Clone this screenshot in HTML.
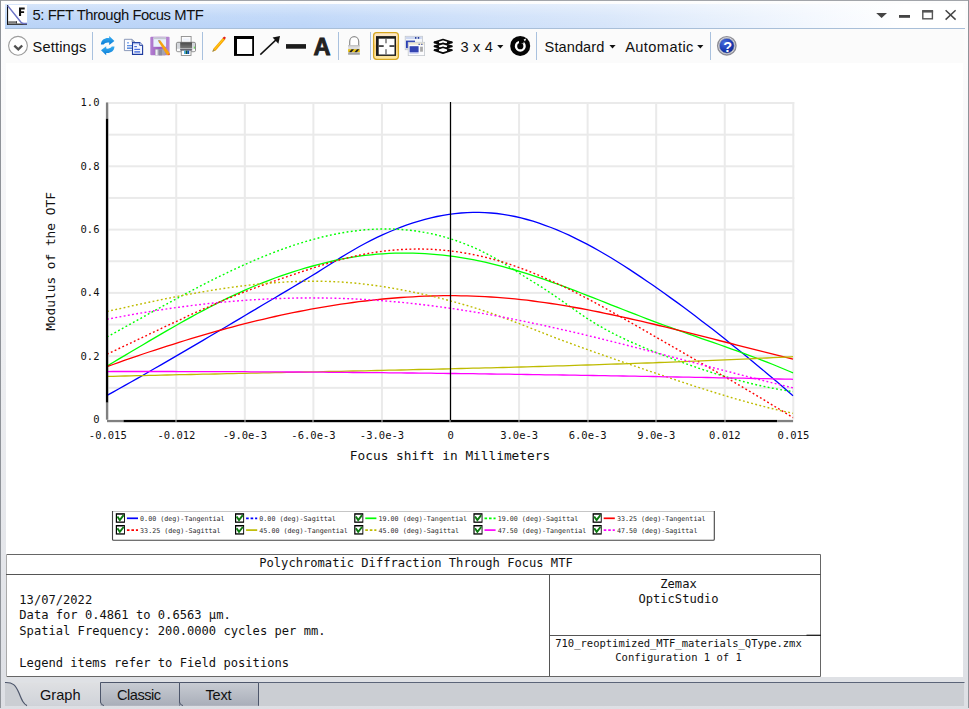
<!DOCTYPE html>
<html><head><meta charset="utf-8"><title>5: FFT Through Focus MTF</title>
<style>
html,body{margin:0;padding:0;}
body{width:969px;height:709px;overflow:hidden;background:#fff;position:relative;font-family:"Liberation Sans",sans-serif;}
.abs{position:absolute;}
#frame{left:0;top:0;width:969px;height:709px;background:linear-gradient(#fdfdfd 0px,#fbfbfc 62px,#dfe1e6 676px,#dddfe4 709px);}
#bl{left:0;top:0;width:1px;height:708px;background:#8f9399;}
#br{left:967.7px;top:0;width:1.3px;height:708px;background:#8f9399;}
#bt{left:0;top:0;width:969px;height:1px;background:#a2a5aa;}
#title{left:5px;top:4px;width:960px;height:24px;background:linear-gradient(180deg,rgba(255,255,255,.42) 0%,rgba(255,255,255,.12) 50%,rgba(255,255,255,0) 100%),linear-gradient(90deg,#b9d3f7 0px,#bcd5f8 300px,#d6e5fa 600px,#f2f7fe 800px,#ffffff 900px);border-bottom:1px solid #a9bfd8;}
#titletxt{left:32.5px;top:6.7px;font-size:14.8px;line-height:17px;color:#111;white-space:nowrap;letter-spacing:-0.43px;}
#toolbar{left:5px;top:29px;width:959px;height:33.5px;background:#fbfbfb;}
#content{left:6px;top:62.5px;width:957px;height:614px;background:#fff;}
.tt{position:absolute;font-size:14.6px;line-height:17px;color:#111;white-space:nowrap;top:38.7px;}
.sep{position:absolute;top:31.5px;width:1.2px;height:28.8px;background:#a9c1de;}
svg text{font-family:"DejaVu Sans Mono","Liberation Mono",monospace;fill:#111;}
.sm{font-size:10.5px;}
.md{font-size:12.8px;}
.bg{font-size:12.12px;}
.lg{font-size:6.7px;fill:#2a2a2a;}
#tabs{left:5px;top:677px;width:959px;height:29px;background:#dfe1e5;}
#tabfill{left:5px;top:682px;width:959px;height:24px;background:#cbced3;}
.tab{position:absolute;top:682px;height:23px;border:1px solid #4d566b;border-bottom:none;background:linear-gradient(#c8ccd3,#a9aeb9);box-sizing:border-box;}
.tabt{position:absolute;top:686.6px;font-size:14.6px;line-height:17px;color:#111;white-space:nowrap;}
</style></head><body>
<div id="frame" class="abs"></div>
<div id="bt" class="abs"></div><div id="bl" class="abs"></div><div id="br" class="abs"></div>
<div id="title" class="abs"></div>
<div id="titletxt" class="abs">5: FFT Through Focus MTF</div>
<div id="toolbar" class="abs"></div>
<div id="content" class="abs"></div>
<div class="tt" style="left:32.6px;letter-spacing:0.15px">Settings</div>
<div class="tt" style="left:460.4px;letter-spacing:0.2px">3 x 4</div>
<div class="tt" style="left:544.6px;letter-spacing:0.07px">Standard</div>
<div class="tt" style="left:625.2px;letter-spacing:0.41px">Automatic</div>
<div class="sep" style="left:92px"></div><div class="sep" style="left:202px"></div><div class="sep" style="left:338px"></div>
<div class="sep" style="left:370px"></div><div class="sep" style="left:536px"></div><div class="sep" style="left:710px"></div>
<!--ICONS-->
<div id="tabs" class="abs"></div><div id="tabfill" class="abs"></div>

<svg class="abs" style="left:0;top:0" width="969" height="709" viewBox="0 0 969 709">
<defs>
<linearGradient id="gblue" x1="0" y1="0" x2="0" y2="1"><stop offset="0" stop-color="#38aef2"/><stop offset="1" stop-color="#0a7cd6"/></linearGradient>
<linearGradient id="gpurple" x1="0" y1="0" x2="1" y2="0"><stop offset="0" stop-color="#b47fd2"/><stop offset="0.5" stop-color="#9a5cbc"/><stop offset="1" stop-color="#b98ad6"/></linearGradient>
<linearGradient id="gprn" x1="0" y1="0" x2="0" y2="1"><stop offset="0" stop-color="#4a4a4a"/><stop offset="1" stop-color="#7c7c7c"/></linearGradient>
<linearGradient id="ghl" x1="0" y1="0" x2="0" y2="1"><stop offset="0" stop-color="#fde9cf"/><stop offset="0.4" stop-color="#fddc9a"/><stop offset="0.5" stop-color="#fdd276"/><stop offset="1" stop-color="#fee9a6"/></linearGradient>
<radialGradient id="ghelp" cx="0.35" cy="0.3" r="0.8"><stop offset="0" stop-color="#4a6ede"/><stop offset="0.6" stop-color="#1a3ab4"/><stop offset="1" stop-color="#10288c"/></radialGradient>
<linearGradient id="gtab" x1="0" y1="0" x2="0" y2="1"><stop offset="0" stop-color="#c8ccd3"/><stop offset="1" stop-color="#a9aeb9"/></linearGradient>
<linearGradient id="gact" x1="0" y1="0" x2="0" y2="1"><stop offset="0" stop-color="#e2e3e5"/><stop offset="1" stop-color="#d0d3d9"/></linearGradient>
</defs>
<rect x="7" y="5" width="20" height="19.8" fill="#fff"/>
<rect x="7" y="5" width="1.1" height="19.8" fill="#111"/>
<rect x="7" y="23.6" width="20" height="1.2" fill="#111"/>
<rect x="8.2" y="21.2" width="8.6" height="2.3" fill="#7c7c7c"/><rect x="16" y="21.2" width="0.9" height="2.3" fill="#333"/>
<path d="M7.6,5.6 L21,22.3 Q22.2,23.6 24,23.6 L27,23.6" fill="none" stroke="#6d74c6" stroke-width="1.5"/>
<path d="M19,7.5 h5.7 v2 h-3.6 v1.8 h3 v1.8 h-3 v3 h-2.1z" fill="#111"/>
<path d="M876.2,12.9 h10.8 l-5.4,5.2z" fill="#444"/>
<rect x="899" y="15" width="11" height="2.8" fill="#444"/>
<rect x="922.8" y="11.6" width="9.6" height="7.2" fill="none" stroke="#555" stroke-width="1.4"/><rect x="922.1" y="10" width="11" height="2.4" fill="#555"/>
<path d="M945.6,10.2 L955.6,19.6 M955.6,10.2 L945.6,19.6" stroke="#444" stroke-width="1.5" fill="none"/>
<circle cx="18" cy="45.8" r="9.4" fill="#fff" stroke="#9c9c9c" stroke-width="1.1"/>
<path d="M14.3,45.6 L18.3,49.4 L22.2,45.5" fill="none" stroke="#505050" stroke-width="2.3"/>
<path d="M100.9,44.6 C101.2,39.6 105.4,37.6 109.2,38.2 L109.2,36 L114.4,41 L109.2,45 L109.2,42.6 C106.8,42.2 104.6,43 103.6,44.6z" fill="url(#gblue)"/>
<path d="M114.5,46.6 C114.2,51.6 110,53.6 106.2,53 L106.2,55.2 L101,50.2 L106.2,46.2 L106.2,48.6 C108.6,49 110.8,48.2 111.8,46.6z" fill="url(#gblue)"/>
<path d="M124.4,39.3 h7.6 l2.8,2.8 v8.5 h-10.4z" fill="#fdfdff" stroke="#7f8fb2" stroke-width="0.9"/>
<path d="M132,39.3 v2.8 h2.8" fill="#aab4cc" stroke="#7f8fb2" stroke-width="0.7"/>
<rect x="127" y="42" width="2" height="1.6" fill="#8fb4ee"/><rect x="127" y="45" width="5" height="1.3" fill="#5f8fe0"/><rect x="127" y="47.4" width="5" height="1.6" fill="#5f8fe0"/>
<path d="M132.5,42.5 h7.2 l2.9,2.9 v9 h-10.1z" fill="#f4f7ff" stroke="#1c3a9e" stroke-width="1.1"/>
<path d="M139.7,42.5 v2.9 h2.9" fill="#fff" stroke="#1c3a9e" stroke-width="0.9"/>
<rect x="132.9" y="42.9" width="6.4" height="1.4" fill="#9fb4ea"/>
<rect x="134.3" y="46" width="2.6" height="1.2" fill="#4a6fdc"/><rect x="134.3" y="48.8" width="5.8" height="1.2" fill="#4a6fdc"/><rect x="134.3" y="51.2" width="5.8" height="1.4" fill="#4a6fdc"/>
<rect x="150.3" y="36.7" width="19.3" height="18.6" rx="1" fill="url(#gpurple)"/>
<rect x="153.4" y="37.4" width="12.7" height="9.4" fill="#e9f1fb"/><rect x="153.4" y="37.4" width="12.7" height="1.8" fill="#c4c8d0"/>
<rect x="155" y="49.2" width="10.2" height="6.1" fill="#a3a3b4"/><rect x="155.6" y="49.6" width="2" height="5.7" fill="#f0f0f6"/><rect x="159" y="49.6" width="3" height="5.7" fill="#8c8ca0"/>
<path d="M158.2,40 L160.4,40.6 L169.6,53 L169,55.2 L166.9,55 L158.9,42.3z" fill="#f7a311"/>
<path d="M158.2,40 L160.4,40.6 L158.9,42.3z" fill="#9a9a8a"/><path d="M168.3,54.6 l1.2,-1.4 l0.1,2 z" fill="#e02020"/>
<rect x="181.3" y="36.5" width="9.8" height="6.5" fill="#fcfcfd" stroke="#8e8e8e" stroke-width="0.9"/>
<rect x="183" y="38.4" width="6.4" height="2.4" fill="#eef2fb"/>
<rect x="176.4" y="42.3" width="19.1" height="9.4" rx="1.4" fill="#d4d7dc" stroke="#7d7d7d" stroke-width="0.9"/>
<rect x="180.2" y="42.4" width="11.8" height="6.2" fill="url(#gprn)"/>
<rect x="176.9" y="48.8" width="18.1" height="2.4" fill="#fafafa"/>
<rect x="193.9" y="46.6" width="1" height="2" fill="#66e04c"/>
<rect x="181.3" y="50" width="9.7" height="5.5" fill="#fff" stroke="#8e8e8e" stroke-width="0.9"/>
<rect x="180" y="49.4" width="12.2" height="0.9" fill="#2a2a3a"/>
<rect x="184" y="50.6" width="1.6" height="3.4" fill="#46b0f0"/><rect x="185.6" y="50.6" width="1.6" height="3.4" fill="#0d5a36"/><rect x="187.2" y="50.6" width="2" height="3.4" fill="#0a50a8"/>
<path d="M212.3,51.8 L213.6,48.4 L223.2,37.4 L225.4,39.2 L215.8,50.4z" fill="#f8a208"/>
<path d="M214.6,49.4 L223.6,38.8" stroke="#ffd814" stroke-width="1" fill="none"/>
<path d="M212.3,51.8 L213.3,49.2 L214.9,50.7z" fill="#8a8a60"/>
<path d="M222.6,38 L224.2,36.4 L226,37.8 L224.6,39.6z" fill="#e02222"/>
<rect x="234" y="36" width="20" height="19.9" fill="#000"/><rect x="237" y="39" width="15.2" height="15" fill="#fff"/>
<path d="M260.3,54.6 L276.5,39.4" stroke="#111" stroke-width="1.5" fill="none"/>
<path d="M280,36 L272.6,37.6 L278.4,43.8z" fill="#111"/>
<rect x="286" y="44.1" width="20" height="4.6" fill="#1c1c1c"/>
<path d="M349.7,46 V41.6 A4.5,4.9 0 0 1 358.7,41.6 V46" fill="#fff" stroke="#8c8c8c" stroke-width="1.2"/>
<rect x="348.1" y="45.3" width="11.7" height="9.4" fill="#dcdcdc"/>
<rect x="348.1" y="45.3" width="11.7" height="1" fill="#b8b8b8"/>
<rect x="348.1" y="49.2" width="11.7" height="3" fill="#e8c010"/>
<path d="M349,52.2 l2.6,-3 h2.4 l-2.6,3z M354.4,52.2 l2.6,-3 h2.4 l-2.6,3z" fill="#222"/>
<rect x="348.1" y="52.6" width="11.7" height="2.1" fill="#a4a4a4"/>
<rect x="373.6" y="32.7" width="24.8" height="26.6" rx="3" fill="url(#ghl)" stroke="#d6a722" stroke-width="1.3"/>
<rect x="376" y="36.1" width="20" height="19.8" fill="#1c1c1c"/><rect x="378.7" y="38.7" width="15.8" height="15.8" fill="#fff"/>
<rect x="378.7" y="45.3" width="5" height="1.5" fill="#1c1c1c"/><rect x="389.5" y="45.3" width="5" height="1.5" fill="#1c1c1c"/>
<rect x="385.4" y="38.7" width="1.2" height="4.6" fill="#555"/><rect x="385.4" y="49.2" width="1.2" height="5.3" fill="#555"/>
<rect x="405.2" y="36.3" width="17.2" height="13.4" fill="#f4f6fa" stroke="#bfc4cc" stroke-width="0.8"/>
<rect x="405.8" y="36.8" width="16" height="2.2" fill="#cdd7f0"/><rect x="415" y="37" width="1.4" height="1.8" fill="#2a3f9a"/><rect x="417.8" y="37" width="1.4" height="1.8" fill="#2a3f9a"/>
<rect x="406" y="40.6" width="9" height="7.6" fill="#2a3fb4"/>
<rect x="408.2" y="42.3" width="16.4" height="13.3" fill="#fbfbfd" stroke="#c4c8ce" stroke-width="0.8"/>
<rect x="408.8" y="42.8" width="15.2" height="1.9" fill="#f0e9d2"/><rect x="418.4" y="43.8" width="1.6" height="0.9" fill="#2a3f9a"/><rect x="421" y="43.8" width="1.6" height="0.9" fill="#2a3f9a"/>
<rect x="409.6" y="46.2" width="9" height="5.8" fill="#3444b2"/><rect x="409.6" y="52" width="9" height="1.5" fill="#aab2ea"/>
<rect x="420.1" y="46.7" width="2.8" height="5" fill="#a9a9a9"/>
<path d="M434.4,42.4 L443,39.5 L451.8,42.4 L443,45.3z" fill="#fff" stroke="#0a0a0a" stroke-width="1.7" stroke-linejoin="round"/>
<path d="M434.4,46.3 L443,43.4 L451.8,46.3 L443,49.2z" fill="#fff" stroke="#0a0a0a" stroke-width="1.7" stroke-linejoin="round"/>
<path d="M434.4,50.2 L443,47.3 L451.8,50.2 L443,53.1z" fill="#fff" stroke="#0a0a0a" stroke-width="1.7" stroke-linejoin="round"/>
<path d="M434,42.4 h5 M447,42.4 h5.4 M434,46.3 h5 M447,46.3 h5.4 M434,50.2 h5 M447,50.2 h5.4" stroke="#0a0a0a" stroke-width="1.8"/>
<path d="M497.2,44.9 h6.2 l-3.1,3.7z" fill="#111"/>
<path d="M609.4,44.9 h6.2 l-3.1,3.7z" fill="#111"/>
<path d="M697.2,44.9 h6.2 l-3.1,3.7z" fill="#111"/>
<circle cx="520.2" cy="45.9" r="10" fill="#050505"/>
<circle cx="520.3" cy="46.2" r="4.3" fill="none" stroke="#fff" stroke-width="2.4"/>
<rect x="519" y="39" width="4.6" height="4.4" fill="#050505"/><rect x="519.4" y="42.4" width="1.6" height="4.4" fill="#050505"/><path d="M523.6,39.6 l2.6,-1 l-1.2,3z" fill="#fff"/>
<circle cx="726.8" cy="45.8" r="9.2" fill="#e8e8ec" stroke="#8e8e96" stroke-width="1.4"/>
<circle cx="726.8" cy="45.8" r="7.5" fill="url(#ghelp)" stroke="#9aa0b0" stroke-width="0.8"/><text x="322" y="54.6" text-anchor="middle" style="font-family:'Liberation Sans',sans-serif;font-weight:bold;font-size:23.6px;fill:#222;stroke:#222;stroke-width:0.9px">A</text><text x="727.8" y="51.5" text-anchor="middle" style="font-family:'Liberation Sans',sans-serif;font-weight:bold;font-size:14.5px;fill:#fff">?</text><path d="M5,682.4 C13,682 15.5,685 19,693 C22,700.5 23.5,704 27,705.8 L100.5,705.8 L100.5,677 L5,677z" fill="url(#gact)"/>
<path d="M5,677 H100.5 V682.5 H5z" fill="#dfe1e5"/>
<path d="M5,682.5 C13,682.2 15.5,685 19,693 C22,700.5 23.5,704 27,705.6" fill="none" stroke="#4d566b" stroke-width="1.2"/>
<path d="M100.5,705.8 V682.5 H179.5 V705.8z" fill="url(#gtab)" stroke="none"/>
<path d="M100.5,702.5 V682.5 H179.5 V705.8" fill="none" stroke="#4d566b" stroke-width="1"/>
<path d="M100.5,702 Q100.8,705 104.0,705.6" fill="none" stroke="#4d566b" stroke-width="1"/>
<path d="M179.5,705.8 V682.5 H258.5 V705.8z" fill="url(#gtab)" stroke="none"/>
<path d="M179.5,702.5 V682.5 H258.5 V705.8" fill="none" stroke="#4d566b" stroke-width="1"/>
<path d="M179.5,702 Q179.8,705 183.0,705.6" fill="none" stroke="#4d566b" stroke-width="1"/>
<path d="M258.5,682.5 H964.5" stroke="#5b6478" stroke-width="1" fill="none"/>
<rect x="106.70" y="102.00" width="2" height="317.5" fill="#eaeaea"/>
<rect x="175.26" y="102.00" width="2" height="317.5" fill="#eaeaea"/>
<rect x="243.82" y="102.00" width="2" height="317.5" fill="#eaeaea"/>
<rect x="312.38" y="102.00" width="2" height="317.5" fill="#eaeaea"/>
<rect x="380.94" y="102.00" width="2" height="317.5" fill="#eaeaea"/>
<rect x="449.50" y="102.00" width="2" height="317.5" fill="#eaeaea"/>
<rect x="518.06" y="102.00" width="2" height="317.5" fill="#eaeaea"/>
<rect x="586.62" y="102.00" width="2" height="317.5" fill="#eaeaea"/>
<rect x="655.18" y="102.00" width="2" height="317.5" fill="#eaeaea"/>
<rect x="723.74" y="102.00" width="2" height="317.5" fill="#eaeaea"/>
<rect x="792.30" y="102.00" width="2" height="317.5" fill="#eaeaea"/>
<rect x="107.7" y="386.85" width="686.6" height="2" fill="#eaeaea"/>
<rect x="107.7" y="355.20" width="686.6" height="2" fill="#eaeaea"/>
<rect x="107.7" y="323.55" width="686.6" height="2" fill="#eaeaea"/>
<rect x="107.7" y="291.90" width="686.6" height="2" fill="#eaeaea"/>
<rect x="107.7" y="260.25" width="686.6" height="2" fill="#eaeaea"/>
<rect x="107.7" y="228.60" width="686.6" height="2" fill="#eaeaea"/>
<rect x="107.7" y="196.95" width="686.6" height="2" fill="#eaeaea"/>
<rect x="107.7" y="165.30" width="686.6" height="2" fill="#eaeaea"/>
<rect x="107.7" y="133.65" width="686.6" height="2" fill="#eaeaea"/>
<rect x="107.7" y="102.00" width="686.6" height="2" fill="#eaeaea"/>
<path d="M107.0,395.4 L113.0,392.1 L119.0,388.8 L125.0,385.4 L131.0,382.0 L137.0,378.6 L143.0,375.2 L149.0,371.8 L155.0,368.3 L161.0,364.9 L167.0,361.4 L173.0,357.9 L179.0,354.4 L185.0,350.9 L191.0,347.4 L197.0,343.9 L203.0,340.4 L209.0,336.8 L215.0,333.3 L221.0,329.7 L227.0,326.2 L233.0,322.6 L239.0,319.1 L245.0,315.5 L251.0,311.9 L257.0,308.4 L263.0,304.8 L269.0,301.2 L275.0,297.7 L281.0,294.1 L287.0,290.6 L293.0,287.0 L299.0,283.4 L305.0,279.9 L311.0,276.3 L317.0,272.6 L323.0,268.8 L329.0,265.0 L335.0,261.2 L341.0,257.4 L347.0,253.8 L353.0,250.2 L359.0,246.8 L365.0,243.5 L371.0,240.4 L377.0,237.4 L383.0,234.6 L389.0,232.0 L395.0,229.5 L401.0,227.1 L407.0,224.9 L413.0,222.9 L419.0,221.1 L425.0,219.4 L431.0,217.9 L437.0,216.5 L443.0,215.4 L449.0,214.4 L455.0,213.6 L461.0,213.0 L467.0,212.6 L473.0,212.4 L479.0,212.4 L485.0,212.6 L491.0,213.0 L497.0,213.5 L503.0,214.3 L509.0,215.3 L515.0,216.5 L521.0,217.9 L527.0,219.5 L533.0,221.2 L539.0,223.2 L545.0,225.3 L551.0,227.5 L557.0,229.9 L563.0,232.5 L569.0,235.2 L575.0,238.1 L581.0,241.1 L587.0,244.2 L593.0,247.4 L599.0,250.8 L605.0,254.3 L611.0,257.8 L617.0,261.5 L623.0,265.3 L629.0,269.1 L635.0,273.1 L641.0,277.1 L647.0,281.2 L653.0,285.3 L659.0,289.5 L665.0,293.8 L671.0,298.1 L677.0,302.4 L683.0,306.8 L689.0,311.3 L695.0,315.8 L701.0,320.4 L707.0,325.0 L713.0,329.6 L719.0,334.3 L725.0,339.1 L731.0,343.9 L737.0,348.7 L743.0,353.6 L749.0,358.5 L755.0,363.4 L761.0,368.4 L767.0,373.5 L773.0,378.5 L779.0,383.6 L785.0,388.8 L791.0,394.0 L793.0,395.7" fill="none" stroke="#0000ff" stroke-width="1.3"/>
<path d="M107.0,366.1 L113.0,362.5 L119.0,358.9 L125.0,355.4 L131.0,351.8 L137.0,348.2 L143.0,344.7 L149.0,341.1 L155.0,337.6 L161.0,334.1 L167.0,330.6 L173.0,327.2 L179.0,323.8 L185.0,320.4 L191.0,317.1 L197.0,313.8 L203.0,310.6 L209.0,307.5 L215.0,304.4 L221.0,301.4 L227.0,298.4 L233.0,295.6 L239.0,292.8 L245.0,290.1 L251.0,287.5 L257.0,285.0 L263.0,282.6 L269.0,280.3 L275.0,278.0 L281.0,275.9 L287.0,273.8 L293.0,271.9 L299.0,270.0 L305.0,268.2 L311.0,266.5 L317.0,264.8 L323.0,263.3 L329.0,261.8 L335.0,260.5 L341.0,259.2 L347.0,258.1 L353.0,257.1 L359.0,256.2 L365.0,255.4 L371.0,254.8 L377.0,254.2 L383.0,253.8 L389.0,253.4 L395.0,253.2 L401.0,253.1 L407.0,253.1 L413.0,253.2 L419.0,253.4 L425.0,253.7 L431.0,254.1 L437.0,254.6 L443.0,255.2 L449.0,255.9 L455.0,256.7 L461.0,257.6 L467.0,258.6 L473.0,259.7 L479.0,260.9 L485.0,262.2 L491.0,263.6 L497.0,265.1 L503.0,266.6 L509.0,268.3 L515.0,270.0 L521.0,271.8 L527.0,273.7 L533.0,275.6 L539.0,277.6 L545.0,279.7 L551.0,281.8 L557.0,284.0 L563.0,286.2 L569.0,288.4 L575.0,290.7 L581.0,293.0 L587.0,295.3 L593.0,297.7 L599.0,300.0 L605.0,302.4 L611.0,304.8 L617.0,307.2 L623.0,309.5 L629.0,311.9 L635.0,314.2 L641.0,316.5 L647.0,318.8 L653.0,321.1 L659.0,323.3 L665.0,325.5 L671.0,327.7 L677.0,329.9 L683.0,332.0 L689.0,334.1 L695.0,336.2 L701.0,338.3 L707.0,340.3 L713.0,342.4 L719.0,344.5 L725.0,346.6 L731.0,348.8 L737.0,350.9 L743.0,353.1 L749.0,355.3 L755.0,357.5 L761.0,359.8 L767.0,362.1 L773.0,364.5 L779.0,367.0 L785.0,369.5 L791.0,372.0 L793.0,372.9" fill="none" stroke="#00ff00" stroke-width="1.3"/>
<path d="M107.0,337.0 L113.0,333.7 L119.0,330.4 L125.0,327.0 L131.0,323.7 L137.0,320.4 L143.0,317.1 L149.0,313.7 L155.0,310.4 L161.0,307.1 L167.0,303.9 L173.0,300.6 L179.0,297.4 L185.0,294.1 L191.0,291.0 L197.0,287.8 L203.0,284.7 L209.0,281.7 L215.0,278.6 L221.0,275.7 L227.0,272.8 L233.0,269.9 L239.0,267.1 L245.0,264.4 L251.0,261.8 L257.0,259.2 L263.0,256.7 L269.0,254.3 L275.0,252.0 L281.0,249.7 L287.0,247.6 L293.0,245.5 L299.0,243.6 L305.0,241.7 L311.0,240.0 L317.0,238.4 L323.0,236.8 L329.0,235.5 L335.0,234.2 L341.0,233.0 L347.0,232.0 L353.0,231.2 L359.0,230.4 L365.0,229.8 L371.0,229.4 L377.0,229.1 L383.0,229.0 L389.0,229.0 L395.0,229.1 L401.0,229.5 L407.0,230.0 L413.0,230.6 L419.0,231.5 L425.0,232.5 L431.0,233.6 L437.0,235.0 L443.0,236.6 L449.0,238.3 L455.0,240.2 L461.0,242.4 L467.0,244.7 L473.0,247.2 L479.0,249.9 L485.0,252.9 L491.0,256.0 L497.0,259.4 L503.0,262.9 L509.0,266.7 L515.0,270.5 L521.0,274.3 L527.0,278.1 L533.0,281.8 L539.0,285.5 L545.0,289.3 L551.0,293.3 L557.0,297.4 L563.0,301.6 L569.0,305.8 L575.0,310.1 L581.0,314.3 L587.0,318.3 L593.0,322.1 L599.0,325.7 L605.0,329.1 L611.0,332.3 L617.0,335.4 L623.0,338.3 L629.0,341.1 L635.0,343.7 L641.0,346.3 L647.0,348.8 L653.0,351.2 L659.0,353.6 L665.0,355.9 L671.0,358.2 L677.0,360.5 L683.0,362.7 L689.0,364.8 L695.0,366.9 L701.0,369.0 L707.0,370.9 L713.0,372.9 L719.0,374.7 L725.0,376.5 L731.0,378.3 L737.0,379.9 L743.0,381.5 L749.0,383.0 L755.0,384.5 L761.0,385.8 L767.0,387.1 L773.0,388.3 L779.0,389.4 L785.0,390.4 L791.0,391.3 L793.0,391.6" fill="none" stroke="#00ff00" stroke-width="1.4" stroke-dasharray="1.85 2.39"/>
<path d="M107.0,366.6 L113.0,364.5 L119.0,362.3 L125.0,360.2 L131.0,358.1 L137.0,356.1 L143.0,354.0 L149.0,352.0 L155.0,350.1 L161.0,348.1 L167.0,346.2 L173.0,344.3 L179.0,342.4 L185.0,340.5 L191.0,338.7 L197.0,336.9 L203.0,335.1 L209.0,333.4 L215.0,331.7 L221.0,330.0 L227.0,328.4 L233.0,326.8 L239.0,325.2 L245.0,323.7 L251.0,322.2 L257.0,320.7 L263.0,319.3 L269.0,317.9 L275.0,316.5 L281.0,315.2 L287.0,313.9 L293.0,312.7 L299.0,311.5 L305.0,310.3 L311.0,309.2 L317.0,308.1 L323.0,307.1 L329.0,306.1 L335.0,305.1 L341.0,304.2 L347.0,303.3 L353.0,302.5 L359.0,301.7 L365.0,301.0 L371.0,300.3 L377.0,299.6 L383.0,299.0 L389.0,298.5 L395.0,298.0 L401.0,297.5 L407.0,297.1 L413.0,296.8 L419.0,296.4 L425.0,296.2 L431.0,296.0 L437.0,295.8 L443.0,295.7 L449.0,295.7 L455.0,295.7 L461.0,295.8 L467.0,295.9 L473.0,296.1 L479.0,296.3 L485.0,296.6 L491.0,297.0 L497.0,297.4 L503.0,297.8 L509.0,298.3 L515.0,298.9 L521.0,299.6 L527.0,300.2 L533.0,301.0 L539.0,301.8 L545.0,302.6 L551.0,303.5 L557.0,304.4 L563.0,305.4 L569.0,306.4 L575.0,307.5 L581.0,308.5 L587.0,309.7 L593.0,310.8 L599.0,312.0 L605.0,313.3 L611.0,314.5 L617.0,315.8 L623.0,317.1 L629.0,318.5 L635.0,319.8 L641.0,321.2 L647.0,322.6 L653.0,324.0 L659.0,325.5 L665.0,326.9 L671.0,328.4 L677.0,329.9 L683.0,331.4 L689.0,332.9 L695.0,334.4 L701.0,335.9 L707.0,337.4 L713.0,338.9 L719.0,340.5 L725.0,342.0 L731.0,343.5 L737.0,345.1 L743.0,346.6 L749.0,348.1 L755.0,349.7 L761.0,351.2 L767.0,352.7 L773.0,354.2 L779.0,355.7 L785.0,357.2 L791.0,358.7 L793.0,359.2" fill="none" stroke="#ff0000" stroke-width="1.3"/>
<path d="M107.0,354.2 L113.0,351.4 L119.0,348.5 L125.0,345.7 L131.0,342.9 L137.0,340.0 L143.0,337.2 L149.0,334.3 L155.0,331.5 L161.0,328.6 L167.0,325.8 L173.0,323.0 L179.0,320.2 L185.0,317.4 L191.0,314.6 L197.0,311.9 L203.0,309.2 L209.0,306.6 L215.0,304.0 L221.0,301.4 L227.0,298.9 L233.0,296.4 L239.0,294.0 L245.0,291.7 L251.0,289.4 L257.0,287.2 L263.0,285.0 L269.0,282.9 L275.0,280.8 L281.0,278.7 L287.0,276.7 L293.0,274.7 L299.0,272.6 L305.0,270.6 L311.0,268.7 L317.0,266.7 L323.0,264.8 L329.0,263.0 L335.0,261.2 L341.0,259.5 L347.0,258.0 L353.0,256.5 L359.0,255.2 L365.0,254.0 L371.0,253.0 L377.0,252.0 L383.0,251.2 L389.0,250.5 L395.0,250.0 L401.0,249.5 L407.0,249.3 L413.0,249.1 L419.0,249.0 L425.0,249.1 L431.0,249.3 L437.0,249.7 L443.0,250.2 L449.0,250.8 L455.0,251.5 L461.0,252.4 L467.0,253.4 L473.0,254.5 L479.0,255.8 L485.0,257.2 L491.0,258.7 L497.0,260.3 L503.0,262.1 L509.0,264.0 L515.0,266.1 L521.0,268.3 L527.0,270.5 L533.0,272.9 L539.0,275.4 L545.0,278.0 L551.0,280.7 L557.0,283.4 L563.0,286.3 L569.0,289.2 L575.0,292.2 L581.0,295.3 L587.0,298.4 L593.0,301.6 L599.0,304.8 L605.0,308.1 L611.0,311.4 L617.0,314.8 L623.0,318.2 L629.0,321.6 L635.0,325.0 L641.0,328.4 L647.0,331.9 L653.0,335.4 L659.0,338.8 L665.0,342.3 L671.0,345.7 L677.0,349.2 L683.0,352.6 L689.0,356.1 L695.0,359.5 L701.0,363.0 L707.0,366.4 L713.0,369.9 L719.0,373.4 L725.0,376.9 L731.0,380.4 L737.0,383.9 L743.0,387.4 L749.0,391.0 L755.0,394.6 L761.0,398.1 L767.0,401.8 L773.0,405.4 L779.0,409.0 L785.0,412.7 L791.0,416.4 L793.0,417.7" fill="none" stroke="#ff0000" stroke-width="1.4" stroke-dasharray="1.85 2.39"/>
<path d="M107.0,376.4 L113.0,376.3 L119.0,376.1 L125.0,376.0 L131.0,375.8 L137.0,375.7 L143.0,375.6 L149.0,375.4 L155.0,375.3 L161.0,375.1 L167.0,375.0 L173.0,374.9 L179.0,374.7 L185.0,374.6 L191.0,374.5 L197.0,374.3 L203.0,374.2 L209.0,374.1 L215.0,374.0 L221.0,373.8 L227.0,373.7 L233.0,373.6 L239.0,373.4 L245.0,373.3 L251.0,373.2 L257.0,373.1 L263.0,372.9 L269.0,372.8 L275.0,372.7 L281.0,372.6 L287.0,372.4 L293.0,372.3 L299.0,372.2 L305.0,372.0 L311.0,371.9 L317.0,371.8 L323.0,371.7 L329.0,371.5 L335.0,371.4 L341.0,371.3 L347.0,371.2 L353.0,371.0 L359.0,370.9 L365.0,370.8 L371.0,370.6 L377.0,370.5 L383.0,370.4 L389.0,370.2 L395.0,370.1 L401.0,370.0 L407.0,369.8 L413.0,369.7 L419.0,369.5 L425.0,369.4 L431.0,369.3 L437.0,369.1 L443.0,369.0 L449.0,368.8 L455.0,368.7 L461.0,368.5 L467.0,368.4 L473.0,368.2 L479.0,368.1 L485.0,367.9 L491.0,367.8 L497.0,367.6 L503.0,367.5 L509.0,367.3 L515.0,367.1 L521.0,367.0 L527.0,366.8 L533.0,366.6 L539.0,366.5 L545.0,366.3 L551.0,366.1 L557.0,365.9 L563.0,365.8 L569.0,365.6 L575.0,365.4 L581.0,365.2 L587.0,365.0 L593.0,364.8 L599.0,364.6 L605.0,364.4 L611.0,364.2 L617.0,364.0 L623.0,363.8 L629.0,363.6 L635.0,363.4 L641.0,363.2 L647.0,363.0 L653.0,362.8 L659.0,362.5 L665.0,362.3 L671.0,362.1 L677.0,361.9 L683.0,361.6 L689.0,361.4 L695.0,361.1 L701.0,360.9 L707.0,360.6 L713.0,360.4 L719.0,360.1 L725.0,359.9 L731.0,359.6 L737.0,359.3 L743.0,359.1 L749.0,358.8 L755.0,358.5 L761.0,358.2 L767.0,358.0 L773.0,357.7 L779.0,357.4 L785.0,357.1 L791.0,356.8 L793.0,356.7" fill="none" stroke="#bebb00" stroke-width="1.3"/>
<path d="M107.0,311.5 L113.0,310.1 L119.0,308.8 L125.0,307.5 L131.0,306.1 L137.0,304.8 L143.0,303.5 L149.0,302.2 L155.0,301.0 L161.0,299.7 L167.0,298.5 L173.0,297.3 L179.0,296.1 L185.0,295.0 L191.0,293.9 L197.0,292.8 L203.0,291.8 L209.0,290.8 L215.0,289.8 L221.0,288.9 L227.0,288.0 L233.0,287.1 L239.0,286.3 L245.0,285.6 L251.0,284.9 L257.0,284.2 L263.0,283.7 L269.0,283.1 L275.0,282.7 L281.0,282.3 L287.0,281.9 L293.0,281.6 L299.0,281.4 L305.0,281.3 L311.0,281.2 L317.0,281.2 L323.0,281.3 L329.0,281.5 L335.0,281.7 L341.0,282.0 L347.0,282.5 L353.0,282.9 L359.0,283.5 L365.0,284.2 L371.0,284.9 L377.0,285.7 L383.0,286.6 L389.0,287.6 L395.0,288.6 L401.0,289.7 L407.0,290.9 L413.0,292.1 L419.0,293.3 L425.0,294.6 L431.0,296.0 L437.0,297.5 L443.0,298.9 L449.0,300.5 L455.0,302.1 L461.0,303.8 L467.0,305.5 L473.0,307.3 L479.0,309.2 L485.0,311.2 L491.0,313.2 L497.0,315.3 L503.0,317.5 L509.0,319.7 L515.0,322.0 L521.0,324.3 L527.0,326.7 L533.0,329.0 L539.0,331.4 L545.0,333.8 L551.0,336.1 L557.0,338.4 L563.0,340.7 L569.0,342.9 L575.0,345.1 L581.0,347.3 L587.0,349.4 L593.0,351.6 L599.0,353.7 L605.0,355.8 L611.0,357.9 L617.0,360.0 L623.0,362.1 L629.0,364.1 L635.0,366.2 L641.0,368.2 L647.0,370.3 L653.0,372.3 L659.0,374.3 L665.0,376.3 L671.0,378.3 L677.0,380.4 L683.0,382.3 L689.0,384.3 L695.0,386.3 L701.0,388.2 L707.0,390.1 L713.0,392.0 L719.0,393.8 L725.0,395.7 L731.0,397.5 L737.0,399.2 L743.0,400.9 L749.0,402.6 L755.0,404.2 L761.0,405.8 L767.0,407.4 L773.0,408.8 L779.0,410.3 L785.0,411.6 L791.0,412.9 L793.0,413.4" fill="none" stroke="#bebb00" stroke-width="1.4" stroke-dasharray="1.85 2.39"/>
<path d="M107.0,371.6 L113.0,371.5 L119.0,371.5 L125.0,371.5 L131.0,371.5 L137.0,371.5 L143.0,371.5 L149.0,371.5 L155.0,371.5 L161.0,371.5 L167.0,371.5 L173.0,371.5 L179.0,371.6 L185.0,371.6 L191.0,371.6 L197.0,371.6 L203.0,371.6 L209.0,371.6 L215.0,371.6 L221.0,371.7 L227.0,371.7 L233.0,371.7 L239.0,371.7 L245.0,371.7 L251.0,371.8 L257.0,371.8 L263.0,371.8 L269.0,371.9 L275.0,371.9 L281.0,371.9 L287.0,372.0 L293.0,372.0 L299.0,372.0 L305.0,372.1 L311.0,372.1 L317.0,372.2 L323.0,372.2 L329.0,372.3 L335.0,372.3 L341.0,372.4 L347.0,372.4 L353.0,372.5 L359.0,372.5 L365.0,372.6 L371.0,372.6 L377.0,372.7 L383.0,372.7 L389.0,372.8 L395.0,372.9 L401.0,372.9 L407.0,373.0 L413.0,373.0 L419.0,373.1 L425.0,373.2 L431.0,373.2 L437.0,373.3 L443.0,373.4 L449.0,373.5 L455.0,373.5 L461.0,373.6 L467.0,373.7 L473.0,373.7 L479.0,373.8 L485.0,373.9 L491.0,374.0 L497.0,374.1 L503.0,374.1 L509.0,374.2 L515.0,374.3 L521.0,374.4 L527.0,374.5 L533.0,374.6 L539.0,374.7 L545.0,374.8 L551.0,374.8 L557.0,374.9 L563.0,375.0 L569.0,375.1 L575.0,375.2 L581.0,375.3 L587.0,375.4 L593.0,375.5 L599.0,375.6 L605.0,375.7 L611.0,375.8 L617.0,375.9 L623.0,376.0 L629.0,376.1 L635.0,376.2 L641.0,376.3 L647.0,376.4 L653.0,376.5 L659.0,376.6 L665.0,376.8 L671.0,376.9 L677.0,377.0 L683.0,377.1 L689.0,377.2 L695.0,377.3 L701.0,377.4 L707.0,377.5 L713.0,377.7 L719.0,377.8 L725.0,377.9 L731.0,378.0 L737.0,378.1 L743.0,378.2 L749.0,378.4 L755.0,378.5 L761.0,378.6 L767.0,378.7 L773.0,378.9 L779.0,379.0 L785.0,379.1 L791.0,379.2 L793.0,379.3" fill="none" stroke="#ff00ff" stroke-width="1.3"/>
<path d="M107.0,319.3 L113.0,318.1 L119.0,317.0 L125.0,315.9 L131.0,314.8 L137.0,313.7 L143.0,312.7 L149.0,311.7 L155.0,310.7 L161.0,309.8 L167.0,308.9 L173.0,308.0 L179.0,307.2 L185.0,306.4 L191.0,305.6 L197.0,304.9 L203.0,304.2 L209.0,303.5 L215.0,302.9 L221.0,302.3 L227.0,301.8 L233.0,301.3 L239.0,300.8 L245.0,300.3 L251.0,299.9 L257.0,299.6 L263.0,299.2 L269.0,298.9 L275.0,298.7 L281.0,298.5 L287.0,298.3 L293.0,298.1 L299.0,298.0 L305.0,298.0 L311.0,297.9 L317.0,298.0 L323.0,298.0 L329.0,298.1 L335.0,298.2 L341.0,298.4 L347.0,298.6 L353.0,298.9 L359.0,299.2 L365.0,299.5 L371.0,299.9 L377.0,300.3 L383.0,300.8 L389.0,301.3 L395.0,301.8 L401.0,302.3 L407.0,302.9 L413.0,303.6 L419.0,304.3 L425.0,305.0 L431.0,305.7 L437.0,306.5 L443.0,307.3 L449.0,308.1 L455.0,309.0 L461.0,309.9 L467.0,310.9 L473.0,311.8 L479.0,312.8 L485.0,313.9 L491.0,314.9 L497.0,316.0 L503.0,317.2 L509.0,318.3 L515.0,319.5 L521.0,320.7 L527.0,321.9 L533.0,323.2 L539.0,324.4 L545.0,325.7 L551.0,327.1 L557.0,328.4 L563.0,329.8 L569.0,331.1 L575.0,332.5 L581.0,333.9 L587.0,335.4 L593.0,336.8 L599.0,338.3 L605.0,339.8 L611.0,341.3 L617.0,342.8 L623.0,344.3 L629.0,345.8 L635.0,347.3 L641.0,348.9 L647.0,350.4 L653.0,352.0 L659.0,353.5 L665.0,355.1 L671.0,356.7 L677.0,358.2 L683.0,359.8 L689.0,361.4 L695.0,362.9 L701.0,364.5 L707.0,366.1 L713.0,367.7 L719.0,369.2 L725.0,370.8 L731.0,372.3 L737.0,373.9 L743.0,375.4 L749.0,377.0 L755.0,378.5 L761.0,380.0 L767.0,381.5 L773.0,383.0 L779.0,384.5 L785.0,386.0 L791.0,387.4 L793.0,387.9" fill="none" stroke="#ff00ff" stroke-width="1.4" stroke-dasharray="1.85 2.39"/>
<rect x="105.9" y="102.5" width="2.3" height="16.2" fill="#808080"/>
<rect x="105.9" y="118.7" width="2.3" height="284" fill="#000"/>
<rect x="105.9" y="402.7" width="2.3" height="17" fill="#808080"/>
<rect x="107" y="419.9" width="16.5" height="2.3" fill="#808080"/>
<rect x="123.5" y="419.9" width="653.6" height="2.3" fill="#000"/>
<rect x="777.1" y="419.9" width="16" height="2.3" fill="#808080"/>
<rect x="175.4" y="419.9" width="1.2" height="2.3" fill="#ddd" opacity="0.75"/>
<rect x="244.4" y="419.9" width="1.2" height="2.3" fill="#ddd" opacity="0.75"/>
<rect x="312.4" y="419.9" width="1.2" height="2.3" fill="#ddd" opacity="0.75"/>
<rect x="381.4" y="419.9" width="1.2" height="2.3" fill="#ddd" opacity="0.75"/>
<rect x="449.4" y="419.9" width="1.2" height="2.3" fill="#ddd" opacity="0.75"/>
<rect x="518.4" y="419.9" width="1.2" height="2.3" fill="#ddd" opacity="0.75"/>
<rect x="587.4" y="419.9" width="1.2" height="2.3" fill="#ddd" opacity="0.75"/>
<rect x="655.4" y="419.9" width="1.2" height="2.3" fill="#ddd" opacity="0.75"/>
<rect x="724.4" y="419.9" width="1.2" height="2.3" fill="#ddd" opacity="0.75"/>
<rect x="449.9" y="102" width="1.2" height="318" fill="#000"/>
<text x="99.5" y="422.8" text-anchor="end" class="sm">0</text>
<text x="99.5" y="359.5" text-anchor="end" class="sm">0.2</text>
<text x="99.5" y="296.2" text-anchor="end" class="sm">0.4</text>
<text x="99.5" y="232.9" text-anchor="end" class="sm">0.6</text>
<text x="99.5" y="169.6" text-anchor="end" class="sm">0.8</text>
<text x="99.5" y="106.3" text-anchor="end" class="sm">1.0</text>
<text x="107.8" y="439" text-anchor="middle" class="sm">-0.015</text>
<text x="176.4" y="439" text-anchor="middle" class="sm">-0.012</text>
<text x="244.9" y="439" text-anchor="middle" class="sm">-9.0e-3</text>
<text x="313.5" y="439" text-anchor="middle" class="sm">-6.0e-3</text>
<text x="382.0" y="439" text-anchor="middle" class="sm">-3.0e-3</text>
<text x="450.6" y="439" text-anchor="middle" class="sm">0</text>
<text x="519.2" y="439" text-anchor="middle" class="sm">3.0e-3</text>
<text x="587.7" y="439" text-anchor="middle" class="sm">6.0e-3</text>
<text x="656.3" y="439" text-anchor="middle" class="sm">9.0e-3</text>
<text x="724.8" y="439" text-anchor="middle" class="sm">0.012</text>
<text x="793.4" y="439" text-anchor="middle" class="sm">0.015</text>
<text x="450" y="460" text-anchor="middle" class="md">Focus shift in Millimeters</text>
<text transform="translate(55,261.5) rotate(-90)" text-anchor="middle" class="md">Modulus of the OTF</text>
<rect x="112.5" y="511.5" width="601.8" height="28.8" fill="#fff" stroke="none"/>
<path d="M112.5,511.5 H714.3" fill="none" stroke="#c6c6c6" stroke-width="1"/>
<path d="M112.5,511 V539.3 Q112.5,540.3 113.5,540.3 H713.3 Q714.3,540.3 714.3,539.3 V511" fill="none" stroke="#444" stroke-width="1.1"/>
<rect x="115.8" y="513.2" width="9.1" height="9.6" fill="#000"/><rect x="117.0" y="514.7" width="7" height="6.8" fill="#fff"/>
<path d="M117.4,516.5 L119.8,520.1 L123.6,515.2" fill="none" stroke="#0c7a10" stroke-width="1.9"/>
<path d="M126.9,518.3 h11.1" stroke="#0000ff" stroke-width="1.7"/>
<text x="140.1" y="520.7" class="lg">0.00 (deg)-Tangential</text>
<rect x="235.0" y="513.2" width="9.1" height="9.6" fill="#000"/><rect x="236.2" y="514.7" width="7" height="6.8" fill="#fff"/>
<path d="M236.6,516.5 L239.0,520.1 L242.8,515.2" fill="none" stroke="#0c7a10" stroke-width="1.9"/>
<path d="M246.1,518.3 h11.1" stroke="#0000ff" stroke-width="1.7" stroke-dasharray="2.6 1.9"/>
<text x="259.3" y="520.7" class="lg">0.00 (deg)-Sagittal</text>
<rect x="354.2" y="513.2" width="9.1" height="9.6" fill="#000"/><rect x="355.4" y="514.7" width="7" height="6.8" fill="#fff"/>
<path d="M355.8,516.5 L358.2,520.1 L362.0,515.2" fill="none" stroke="#0c7a10" stroke-width="1.9"/>
<path d="M365.3,518.3 h11.1" stroke="#00ff00" stroke-width="1.7"/>
<text x="378.5" y="520.7" class="lg">19.00 (deg)-Tangential</text>
<rect x="473.4" y="513.2" width="9.1" height="9.6" fill="#000"/><rect x="474.6" y="514.7" width="7" height="6.8" fill="#fff"/>
<path d="M475.0,516.5 L477.4,520.1 L481.2,515.2" fill="none" stroke="#0c7a10" stroke-width="1.9"/>
<path d="M484.5,518.3 h11.1" stroke="#00ff00" stroke-width="1.7" stroke-dasharray="2.6 1.9"/>
<text x="497.7" y="520.7" class="lg">19.00 (deg)-Sagittal</text>
<rect x="592.6" y="513.2" width="9.1" height="9.6" fill="#000"/><rect x="593.8" y="514.7" width="7" height="6.8" fill="#fff"/>
<path d="M594.2,516.5 L596.6,520.1 L600.4,515.2" fill="none" stroke="#0c7a10" stroke-width="1.9"/>
<path d="M603.7,518.3 h11.1" stroke="#ff0000" stroke-width="1.7"/>
<text x="616.9" y="520.7" class="lg">33.25 (deg)-Tangential</text>
<rect x="115.8" y="525.0" width="9.1" height="9.6" fill="#000"/><rect x="117.0" y="526.5" width="7" height="6.8" fill="#fff"/>
<path d="M117.4,528.3 L119.8,531.9 L123.6,527.0" fill="none" stroke="#0c7a10" stroke-width="1.9"/>
<path d="M126.9,530.1 h11.1" stroke="#ff0000" stroke-width="1.7" stroke-dasharray="2.6 1.9"/>
<text x="140.1" y="532.5" class="lg">33.25 (deg)-Sagittal</text>
<rect x="235.0" y="525.0" width="9.1" height="9.6" fill="#000"/><rect x="236.2" y="526.5" width="7" height="6.8" fill="#fff"/>
<path d="M236.6,528.3 L239.0,531.9 L242.8,527.0" fill="none" stroke="#0c7a10" stroke-width="1.9"/>
<path d="M246.1,530.1 h11.1" stroke="#bebb00" stroke-width="1.7"/>
<text x="259.3" y="532.5" class="lg">45.00 (deg)-Tangential</text>
<rect x="354.2" y="525.0" width="9.1" height="9.6" fill="#000"/><rect x="355.4" y="526.5" width="7" height="6.8" fill="#fff"/>
<path d="M355.8,528.3 L358.2,531.9 L362.0,527.0" fill="none" stroke="#0c7a10" stroke-width="1.9"/>
<path d="M365.3,530.1 h11.1" stroke="#bebb00" stroke-width="1.7" stroke-dasharray="2.6 1.9"/>
<text x="378.5" y="532.5" class="lg">45.00 (deg)-Sagittal</text>
<rect x="473.4" y="525.0" width="9.1" height="9.6" fill="#000"/><rect x="474.6" y="526.5" width="7" height="6.8" fill="#fff"/>
<path d="M475.0,528.3 L477.4,531.9 L481.2,527.0" fill="none" stroke="#0c7a10" stroke-width="1.9"/>
<path d="M484.5,530.1 h11.1" stroke="#ff00ff" stroke-width="1.7"/>
<text x="497.7" y="532.5" class="lg">47.50 (deg)-Tangential</text>
<rect x="592.6" y="525.0" width="9.1" height="9.6" fill="#000"/><rect x="593.8" y="526.5" width="7" height="6.8" fill="#fff"/>
<path d="M594.2,528.3 L596.6,531.9 L600.4,527.0" fill="none" stroke="#0c7a10" stroke-width="1.9"/>
<path d="M603.7,530.1 h11.1" stroke="#ff00ff" stroke-width="1.7" stroke-dasharray="2.6 1.9"/>
<text x="616.9" y="532.5" class="lg">47.50 (deg)-Sagittal</text>
<path d="M6.5,554.5 H820.5 V676.5 H6.5" fill="none" stroke="#666" stroke-width="1"/>
<path d="M6.5,555 V676" fill="none" stroke="#aaa" stroke-width="1"/>
<path d="M6,574.5 H821 M549.5,575 V676 M550,635.5 H821" fill="none" stroke="#555" stroke-width="1"/>
<path d="M806.5,635.3 H821" fill="none" stroke="#222" stroke-width="1.3"/>
<text x="416" y="567.3" text-anchor="middle" class="bg">Polychromatic Diffraction Through Focus MTF</text>
<text x="19.3" y="603.6" class="bg">13/07/2022</text>
<text x="19.3" y="619.4" class="bg">Data for 0.4861 to 0.6563 µm.</text>
<text x="19.3" y="635.1" class="bg">Spatial Frequency: 200.0000 cycles per mm.</text>
<text x="19.3" y="666.6" class="bg">Legend items refer to Field positions</text>
<text x="678.5" y="588.3" text-anchor="middle" class="bg">Zemax</text>
<text x="678.5" y="603.3" text-anchor="middle" class="bg">OpticStudio</text>
<text x="678.5" y="647" text-anchor="middle" class="sm">710_reoptimized_MTF_materials_QType.zmx</text>
<text x="678.5" y="661.4" text-anchor="middle" class="sm">Configuration 1 of 1</text>
</svg>
<div class="tabt" style="left:40px">Graph</div><div class="tabt" style="left:117px;letter-spacing:-0.5px">Classic</div><div class="tabt" style="left:205.5px;letter-spacing:-0.25px">Text</div>
</body></html>
